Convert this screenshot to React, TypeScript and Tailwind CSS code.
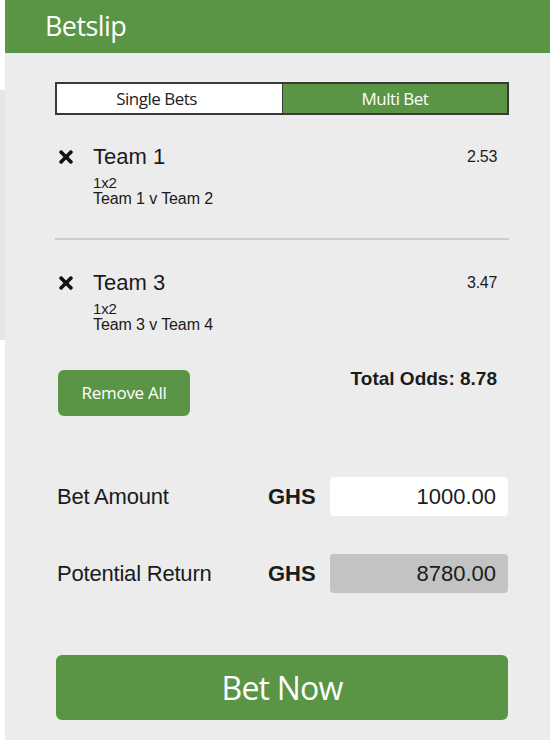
import React from 'react';
import { FaTimes } from 'react-icons/fa';

interface BetItemProps {
  team: string;
  market: string;
  fixture: string;
  odds: string;
}

const sans = { fontFamily: '"Liberation Sans", Arial, sans-serif' };
const ui = { fontFamily: '"Open Sans", "Noto Sans", sans-serif' };

function BetItem({ team, market, fixture, odds }: BetItemProps) {
  return (
    <div className="flex items-start text-[#1b1b1b]" style={sans}>
      <div className="w-[38px] h-[28px] flex items-center pl-[1px]">
        <FaTimes className="w-[20px] h-[20px] text-[#111]" />
      </div>
      <div className="flex-1">
        <div className="text-[22px] leading-[28px]">{team}</div>
        <div className="mt-[4px] text-[15px] leading-[16px] tracking-[-0.2px]">{market}</div>
        <div className="text-[16px] leading-[16px] tracking-[-0.1px]">{fixture}</div>
      </div>
      <div className="pr-[12px] text-[16px] leading-[28px] tracking-[-0.3px]">{odds}</div>
    </div>
  );
}

export default function App() {
  return (
    <div className="flex w-[550px] h-[740px] bg-[#ececec] overflow-hidden">
      <div className="w-[5px] bg-white flex flex-col">
        <div className="mt-[90px] h-[250px] bg-[#e6e6e6]" />
      </div>

      <div className="flex-1 flex flex-col">
        <div className="h-[53px] bg-[#5a9545] flex items-center pl-[40px]">
          <span className="text-white text-[27px] tracking-[-0.6px]" style={ui}>
            Betslip
          </span>
        </div>

        <div className="pl-[50px] pr-[41px] flex flex-col">
          <div className="mt-[29px] h-[33px] grid grid-cols-2 border-2 border-[#3a3a3a]" style={ui}>
            <div className="bg-white flex items-center justify-center pr-[26px] text-[17px] text-[#222] tracking-[-0.5px]">
              Single Bets
            </div>
            <div className="bg-[#5a9545] border-l border-[#3a3a3a] flex items-center justify-center text-[17px] text-white tracking-[-0.5px]">
              Multi Bet
            </div>
          </div>

          <div className="mt-[28px]">
            <BetItem team="Team 1" market="1x2" fixture="Team 1 v Team 2" odds="2.53" />
          </div>

          <div className="mt-[31px] h-[2px] bg-[#cdcdcd]" />

          <div className="mt-[29px]">
            <BetItem team="Team 3" market="1x2" fixture="Team 3 v Team 4" odds="3.47" />
          </div>

          <div className="mt-[34px] flex items-start justify-between">
            <button
              className="mt-[3px] ml-[3px] w-[132px] h-[46px] rounded-[6px] bg-[#5a9545] text-white text-[17px] tracking-[-0.3px]"
              style={ui}
            >
              Remove All
            </button>
            <div
              className="pr-[12px] text-[19px] leading-[24px] font-bold text-[#1b1b1b]"
              style={sans}
            >
              Total Odds: 8.78
            </div>
          </div>

          <div className="mt-[61px] flex items-center text-[#1b1b1b]" style={sans}>
            <div className="w-[213px] pl-[2px] text-[22px] tracking-[-0.2px]">Bet Amount</div>
            <div className="w-[62px] text-[22px] font-bold">GHS</div>
            <div className="flex-1 mr-[1px] h-[39px] rounded-[4px] bg-white flex items-center justify-end pr-[12px] text-[22px]">
              1000.00
            </div>
          </div>

          <div className="mt-[38px] flex items-center text-[#1b1b1b]" style={sans}>
            <div className="w-[213px] pl-[2px] text-[22px] tracking-[-0.2px]">Potential Return</div>
            <div className="w-[62px] text-[22px] font-bold">GHS</div>
            <div className="flex-1 mr-[1px] h-[39px] rounded-[4px] bg-[#c3c3c3] flex items-center justify-end pr-[12px] text-[22px]">
              8780.00
            </div>
          </div>

          <button
            className="mt-[62px] ml-[1px] mr-[1px] h-[65px] rounded-[6px] bg-[#5a9545] text-white text-[32px] tracking-[-0.8px]"
            style={ui}
          >
            Bet Now
          </button>
        </div>
      </div>
    </div>
  );
}
